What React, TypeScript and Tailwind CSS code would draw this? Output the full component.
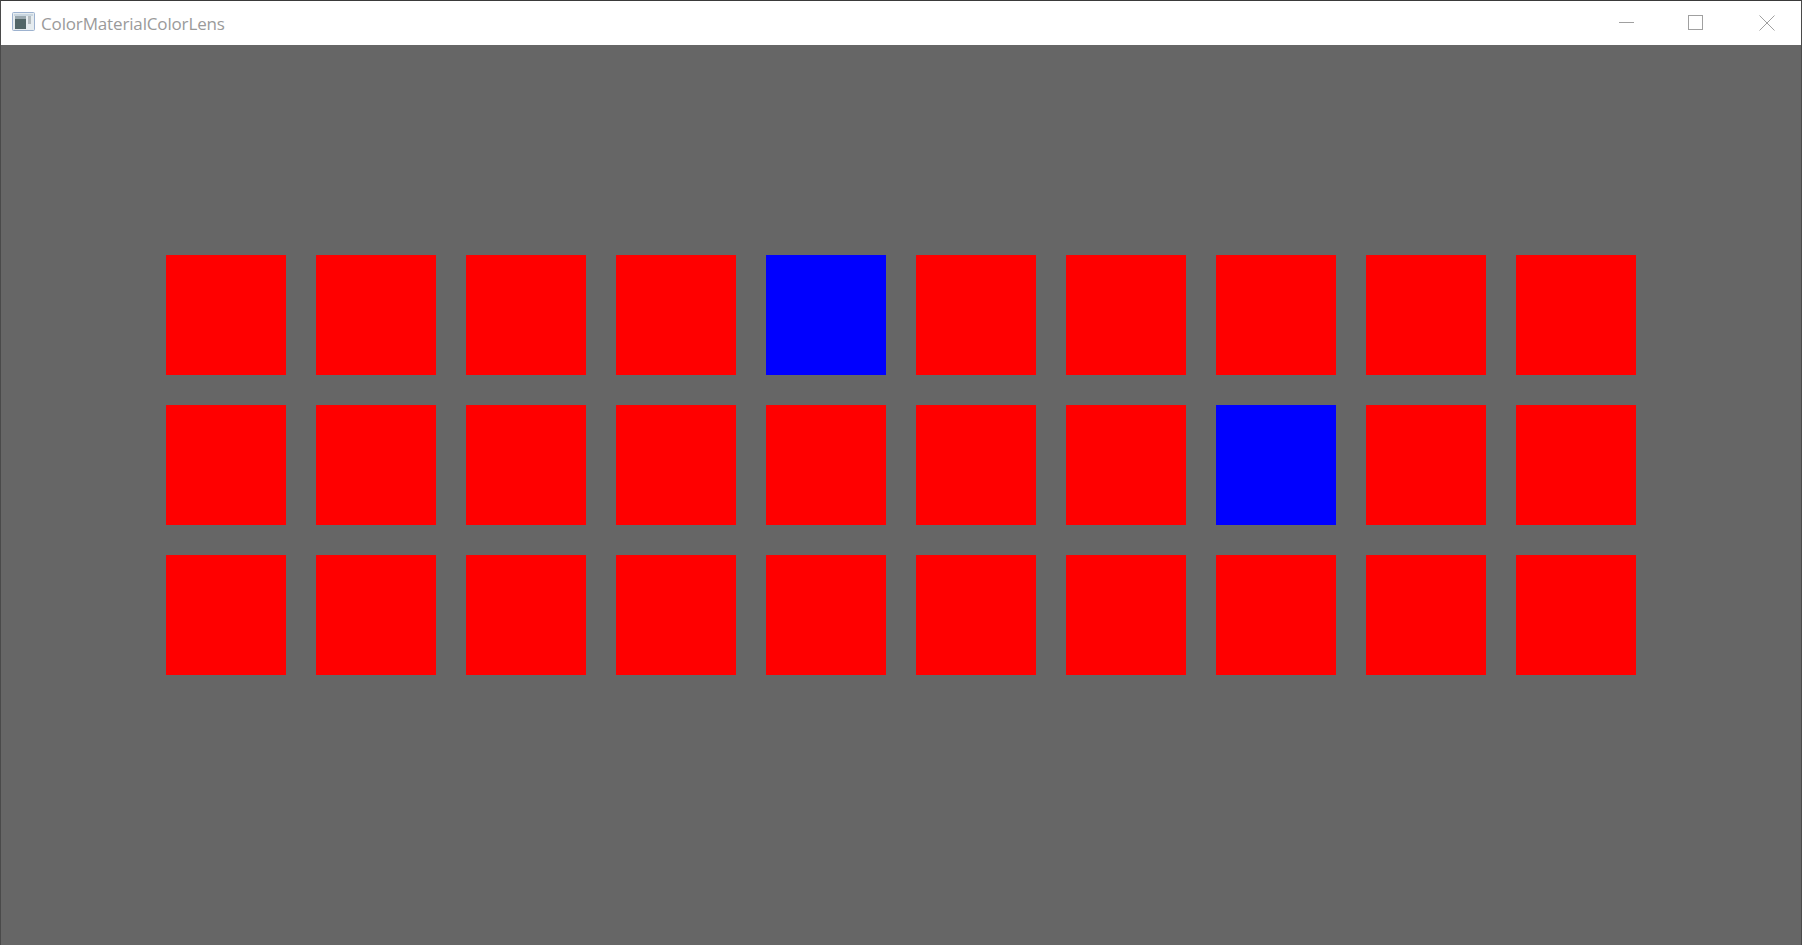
import React from "react";

const rows = [
  [0, 0, 0, 0, 1, 0, 0, 0, 0, 0],
  [0, 0, 0, 0, 0, 0, 0, 1, 0, 0],
  [0, 0, 0, 0, 0, 0, 0, 0, 0, 0],
];

function AppIcon() {
  return (
    <svg width="24" height="20" viewBox="0 0 24 20" className="-mt-[4px] shrink-0">
      <rect x="0.5" y="0.5" width="22" height="18" rx="1" fill="#e6ecef" stroke="#9db2cf" />
      <rect x="2" y="2" width="19" height="2" fill="#c9d6e0" />
      <rect x="3" y="4" width="11" height="3" fill="#9aa8af" />
      <rect x="3" y="7" width="11" height="10" fill="#526667" />
      <rect x="16" y="4" width="3" height="8" fill="#b4bcc0" />
    </svg>
  );
}

export default function App() {
  return (
    <div className="flex h-[945px] w-[1802px] flex-col overflow-hidden border-x border-t border-x-[#4a4a4a] border-t-[#3a3a3a] bg-[#666666]">
      <div className="flex h-[44px] shrink-0 items-center bg-white pl-[11px] pt-[2px]">
        <AppIcon />
        <span className="ml-[5px] font-['Open_Sans',sans-serif] text-[17px] tracking-[-0.15px] text-[#9a9a9a]">
          ColorMaterialColorLens
        </span>
        <div className="-mt-[2px] ml-auto flex items-center">
          <svg width="16" height="16" viewBox="0 0 16 16" className="mr-[53px]">
            <line x1="0" y1="7.5" x2="15" y2="7.5" stroke="#a0a0a0" />
          </svg>
          <svg width="16" height="16" viewBox="0 0 16 16" className="mr-[55px]">
            <rect x="0.5" y="0.5" width="14" height="14" fill="none" stroke="#a0a0a0" />
          </svg>
          <svg width="16" height="16" viewBox="0 0 16 16" className="mr-[26px]">
            <path d="M0.5 0.5 L15.5 15.5 M15.5 0.5 L0.5 15.5" fill="none" stroke="#a0a0a0" />
          </svg>
        </div>
      </div>
      <div className="flex flex-col gap-[30px] pl-[165px] pt-[210px]">
        {rows.map((row, r) => (
          <div key={r} className="flex gap-[30px]">
            {row.map((blue, c) => (
              <div key={c} className={blue ? "h-[120px] w-[120px] bg-[#0000ff]" : "h-[120px] w-[120px] bg-[#ff0000]"} />
            ))}
          </div>
        ))}
      </div>
    </div>
  );
}
